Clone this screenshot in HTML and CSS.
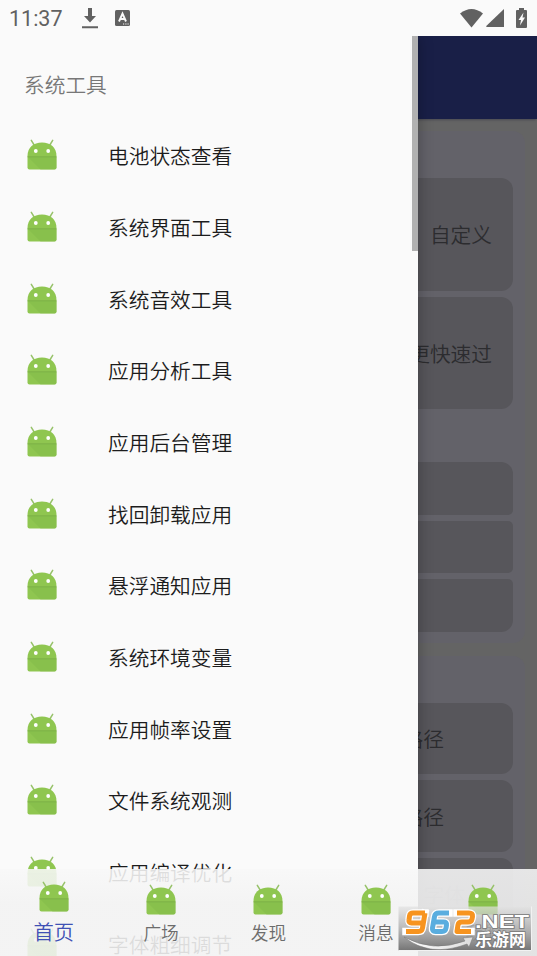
FILE: index.html
```html
<!DOCTYPE html>
<html lang="zh-CN">
<head>
<meta charset="utf-8">
<title>系统工具</title>
<link rel="stylesheet" href="styles.css">
</head>
<body>
<svg class="defs" aria-hidden="true">
  <symbol id="robot" viewBox="0 0 30 31">
    <path d="M4.300 1.300 7.500 6.500M25.700 1.300 22.500 6.500" fill="none" stroke="#97c26a" stroke-width="1.500" stroke-linecap="round"/>
    <path d="M.5 17C.5 8.500 6.500 3.500 15 3.500S29.500 8.500 29.500 17V28.500Q29.500 30.500 27.500 30.500H2.500Q.5 30.500 .5 28.500Z" fill="#8fc650"/>
    <path d="M1 18 13.500 30.500H27.500Q29.500 30.500 29.500 28.500V18Z" fill="#84bb49" opacity=".55"/>
    <path d="M.5 17.800H29.500" stroke="#76a943" stroke-width=".7"/>
    <circle cx="8.800" cy="12" r="1.900" fill="#fff"/><circle cx="21.200" cy="12" r="1.900" fill="#fff"/>
  </symbol>
</svg>
<div class="phone">
  <header class="status">
    <span class="clock">11:37</span>
    <svg class="download" viewBox="0 0 16 21"><path d="M6 0h4v8h4l-6 6.500L2 8h4zM0 18.300h16v2H0z"/></svg>
    <svg class="keyboard" viewBox="0 0 15 16"><rect width="15" height="16" rx="1.500"/><path d="M4 11.500 7.500 3.500 11 11.500M5.300 9h4.400" fill="none" stroke="#fafafa" stroke-width="1.900"/><path d="M8 14h1.200M10.300 14h1.200M12.500 14h1.200" stroke="#fafafa"/></svg>
    <svg class="wifi" viewBox="0 0 23 19"><path d="M0 4.500Q11.500-4.500 23 4.500L11.500 18.500Z"/></svg>
    <svg class="signal" viewBox="0 0 18 18"><path d="M18 0V18H1Q-.5 18 .5 16.800Z"/></svg>
    <svg class="battery" viewBox="0 0 11 20"><path d="M3 0h5v2h2q1 0 1 1v16q0 1-1 1H1q-1 0-1-1V3q0-1 1-1h2z"/><path d="M7.500 4.500 2.500 12H5L4 17.500 9 9.500H6.500Z" fill="#fafafa"/></svg>
  </header>
  <div class="appbar"></div>
  <main class="page">
    <section class="card first">
      <div class="tile tall">自定义</div>
      <div class="tile tall">更快速过</div>
      <div class="rows">
        <div class="tile row"></div>
        <div class="tile row"></div>
        <div class="tile row"></div>
      </div>
    </section>
    <section class="card second">
      <div class="tile path">路径</div>
      <div class="tile path">路径</div>
      <div class="tile path font">字体</div>
    </section>
  </main>
  <aside class="drawer">
    <h1>系统工具</h1>
    <ul>
      <li><svg class="robot"><use href="#robot"/></svg>电池状态查看</li>
      <li><svg class="robot"><use href="#robot"/></svg>系统界面工具</li>
      <li><svg class="robot"><use href="#robot"/></svg>系统音效工具</li>
      <li><svg class="robot"><use href="#robot"/></svg>应用分析工具</li>
      <li><svg class="robot"><use href="#robot"/></svg>应用后台管理</li>
      <li><svg class="robot"><use href="#robot"/></svg>找回卸载应用</li>
      <li><svg class="robot"><use href="#robot"/></svg>悬浮通知应用</li>
      <li><svg class="robot"><use href="#robot"/></svg>系统环境变量</li>
      <li><svg class="robot"><use href="#robot"/></svg>应用帧率设置</li>
      <li><svg class="robot"><use href="#robot"/></svg>文件系统观测</li>
      <li><svg class="robot"><use href="#robot"/></svg>应用编译优化</li>
      <li><svg class="robot"><use href="#robot"/></svg>字体粗细调节</li>
    </ul>
    <div class="thumb"></div>
  </aside>
  <nav class="tabs">
    <a class="active"><svg class="robot"><use href="#robot"/></svg><span>首页</span></a>
    <a><svg class="robot"><use href="#robot"/></svg><span>广场</span></a>
    <a><svg class="robot"><use href="#robot"/></svg><span>发现</span></a>
    <a><svg class="robot"><use href="#robot"/></svg><span>消息</span></a>
    <a><svg class="robot"><use href="#robot"/></svg><span>我的</span></a>
  </nav>
  <svg class="watermark" viewBox="0 0 134 45">
    <defs>
      <linearGradient id="plate" x2="0" y2="1"><stop stop-color="#e2e2e2" stop-opacity=".7"/><stop offset=".5" stop-color="#aaa" stop-opacity=".8"/><stop offset="1" stop-color="#747474"/></linearGradient>
      <linearGradient id="swoosh"><stop stop-color="#fff"/><stop offset="1" stop-color="#ddd"/></linearGradient>
    </defs>
    <rect x=".5" y=".5" width="133" height="44" fill="url(#plate)"/>
    <path d="M.5 44.500H133.500V.5" fill="none" stroke="#f2f2f2"/>
    <path d="M6 31Q35 47 67 35L65 32 75 31 71 41 69 38Q32 52 6 31Z" fill="url(#swoosh)" stroke="#777" stroke-width=".5"/>
    <g class="digits">
      <path class="halo" d="M27 7H15Q12 7 11.500 10L11 14Q10.500 17 13.500 17H25M27 7 24.500 22Q24 25.500 20.500 25.500H8"/>
      <path class="halo" d="M51 7H41Q37 7 36.500 10.500L34.500 22Q34 25.500 37.500 25.500H44Q47.500 25.500 48 22L48.500 19Q49 16 45.500 16H36"/>
      <path class="halo" d="M59 7H71Q75 7 74.500 10.500L74 13Q73.500 16 70 16H64Q60.500 16 60 19L59 25.500H73"/>
      <path class="orange" d="M27 7H15Q12 7 11.500 10L11 14Q10.500 17 13.500 17H25M27 7 24.500 22Q24 25.500 20.500 25.500H8"/>
      <path class="blue" d="M51 7H41Q37 7 36.500 10.500L34.500 22Q34 25.500 37.500 25.500H44Q47.500 25.500 48 22L48.500 19Q49 16 45.500 16H36"/>
      <path class="orange" d="M59 7H71Q75 7 74.500 10.500L74 13Q73.500 16 70 16H64Q60.500 16 60 19L59 25.500H73"/>
    </g>
    <text class="net" x="77" y="22" textLength="54" lengthAdjust="spacingAndGlyphs">.NET</text>
    <text class="site" x="77" y="40" textLength="51">乐游网</text>
  </svg>
</div>
</body>
</html>
```
FILE: styles.css
```css
* { box-sizing: border-box; }
body {
  margin: 0;
  font-family: "Noto Sans CJK SC", sans-serif;
  font-weight: 350;
  background: #646464;
}
.defs { position: absolute; width: 0; height: 0; }
.phone {
  position: relative;
  width: 537px;
  height: 956px;
  overflow: hidden;
  display: flex;
  flex-direction: column;
}
.status {
  height: 36px;
  flex: none;
  display: flex;
  align-items: center;
  padding: 0 10px 0 9px;
  background: #fafafa;
  color: #616161;
  fill: #616161;
}
.clock {
  width: 73px;
  font: 400 21.500px/36px Roboto, sans-serif;
  padding-top: 1px;
}
.download { width: 16px; height: 21px; }
.keyboard { width: 15px; height: 16px; margin-left: 17px; }
.wifi { width: 23px; height: 19px; margin: 0 3px 0 auto; }
.signal { width: 18px; height: 18px; margin-right: 12px; }
.battery { width: 11px; height: 20px; }
.appbar {
  height: 83px;
  flex: none;
  background: #191f47;
  box-shadow: 0 2px 2px -1px #4a4a52;
  z-index: 1;
}
.page {
  flex: none;
  padding: 12px;
  display: flex;
  flex-direction: column;
  gap: 12.500px;
}
.card {
  background: #636269;
  border-radius: 12px;
  padding: 47px 12px 11.500px;
  display: flex;
  flex-direction: column;
  gap: 6px;
}
.first { height: 512px; }
.second { height: 360px; }
.rows { display: flex; flex-direction: column; gap: 6px; margin-top: 47px; }
.tile {
  display: flex;
  align-items: center;
  justify-content: flex-end;
  padding: 0 21px 0 0;
  background: #57565b;
  color: #2c2c2f;
  font-size: 20.700px;
  border-radius: 12px;
}
.tall { height: 112.500px; flex: none; }
.row { height: 52.700px; border-radius: 5px; }
.row:first-child { border-top-right-radius: 12px; }
.row:last-child { border-bottom-right-radius: 12px; }
.path { height: 71.700px; flex: none; padding-right: 69px; }
.font { padding-right: 48px; color: #454549; }
.drawer {
  position: absolute;
  left: 0;
  top: 36px;
  width: 417.500px;
  height: 920px;
  background: #fafafa;
  box-shadow: 0 0 14px rgba(0, 0, 0, .3);
  z-index: 2;
  clip-path: inset(0 -20px 0 0);
}
h1 {
  margin: 0;
  height: 84px;
  padding: 12px 0 0 24px;
  font-size: 20.700px;
  line-height: 72px;
  font-weight: 350;
  color: #777;
}
ul { list-style: none; margin: 0; padding: 0; }
li {
  height: 71.700px;
  display: flex;
  align-items: center;
  gap: 51.500px;
  padding: 0 0 1.200px 26.500px;
  font-size: 20.700px;
  color: #1c1c1c;
}
.robot { display: block; width: 30px; height: 31px; flex: none; }
li .robot { margin-bottom: 1px; }
.thumb {
  position: absolute;
  right: 0;
  top: 0;
  width: 6px;
  height: 215px;
  background: #b1b1b1;
}
.tabs {
  position: absolute;
  left: 0;
  top: 869px;
  width: 537px;
  height: 87px;
  display: grid;
  grid-template-columns: repeat(5, 1fr);
  background: linear-gradient(rgba(248, 248, 248, .88), rgba(243, 243, 243, .89) 35px);
  z-index: 3;
}
.tabs a {
  display: flex;
  flex-direction: column;
  align-items: center;
  padding-top: 15px;
  font-size: 17.700px;
  line-height: 28px;
  color: #6c6c6c;
}
.tabs span { margin-top: 2.500px; }
.tabs .active { padding-top: 12px; font-size: 20.300px; color: #3f51b5; }
.tabs .active span { margin-top: 4.500px; }
.watermark {
  position: absolute;
  left: 398px;
  top: 906px;
  width: 134px;
  height: 45px;
  z-index: 4;
}
.digits { fill: none; stroke-linejoin: round; }
.halo { stroke: #fff; stroke-width: 7.500px; stroke-linecap: square; }
.orange { stroke: #f7941f; stroke-width: 5px; }
.blue { stroke: #59addf; stroke-width: 5px; }
.net, .site {
  fill: #fff;
  stroke: #777;
  stroke-width: 1.500px;
  paint-order: stroke;
}
.net { font: 700 19px "Liberation Sans", sans-serif; }
.site { font: 700 17px "Noto Sans CJK SC", sans-serif; }
```
